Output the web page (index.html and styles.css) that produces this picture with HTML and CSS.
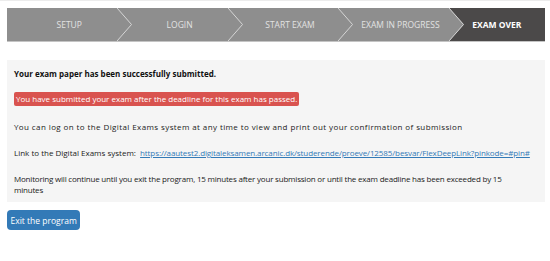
FILE: index.html
```html
<!DOCTYPE html>
<html lang="en">
<head>
    <meta charset="UTF-8">
    <meta name="viewport" content="width=device-width, initial-scale=1.0">
    <title>Exam over</title>
    <link rel="stylesheet" href="styles.css">
</head>
<body>

    <div class="steps">
        <div class="step first">SETUP
            <svg class="chevron" viewBox="0 0 16 34" preserveAspectRatio="none"><polyline points="0,0 14.5,17 0,34"/></svg>
        </div>
        <div class="step">LOGIN
            <svg class="chevron" viewBox="0 0 16 34" preserveAspectRatio="none"><polyline points="0,0 14.5,17 0,34"/></svg>
        </div>
        <div class="step">START EXAM
            <svg class="chevron" viewBox="0 0 16 34" preserveAspectRatio="none"><polyline points="0,0 14.5,17 0,34"/></svg>
        </div>
        <div class="step">EXAM IN PROGRESS
            <svg class="chevron" viewBox="0 0 16 34" preserveAspectRatio="none"><polyline points="0,0 14.5,17 0,34"/></svg>
        </div>
        <div class="step active">EXAM OVER</div>
    </div>

    <div class="panel">
        <p class="heading">Your exam paper has been successfully submitted.</p>
        <p class="alert">You have submitted your exam after the deadline for this exam has passed.</p>
        <p class="info wide">You can log on to the Digital Exams system at any time to view and print out your confirmation of submission</p>
        <p class="info link-line">Link to the Digital Exams system: &nbsp;<a href="#">https://aautest2.digitaleksamen.arcanic.dk/studerende/proeve/12585/besvar/FlexDeepLink?pinkode=#pin#</a></p>
        <p class="info monitor">Monitoring will continue until you exit the program, 15 minutes after your submission or until the exam deadline has been exceeded by 15 minutes</p>
    </div>

    <button class="exit">Exit the program</button>

</body>
</html>
```

FILE: styles.css
```css
html {
    border-top: 1px solid #ececec;
}
body {
    margin: 7px 5px 0 7px;
    font-family: "Open Sans", "Noto Sans", sans-serif;
    font-size: 8px;
    color: #222;
    background: #fff;
}
.steps {
    display: flex;
    height: 34px;
    background: #8e8e8e;
    border-bottom: 1px solid #c4c4c4;
    box-sizing: border-box;
}
.step {
    position: relative;
    flex: 1;
    display: flex;
    align-items: center;
    justify-content: center;
    padding-left: 14px;
    color: #e2e2e2;
    font-size: 8.5px;
}
.step.active {
    background: #4b4949;
    color: #fff;
    font-weight: 700;
    clip-path: polygon(0 0, 100% 0, 100% 100%, 0 100%, 15px 50%);
    padding-left: 0;
}
.chevron {
    position: absolute;
    top: 0;
    right: -16px;
    width: 16px;
    height: 100%;
    z-index: 2;
}
.chevron polyline {
    fill: #8e8e8e;
    stroke: #d6d6d6;
    stroke-width: 1;
}
.panel {
    margin-top: 18px;
    background: #f5f5f5;
    padding: 8px 7px 7px;
}
.panel p {
    margin: 0;
    line-height: 11px;
}
.heading {
    font-weight: 700;
    color: #111;
}
.alert {
    display: inline-block;
    margin-top: 13px !important;
    padding: 2px 2px;
    line-height: 10px !important;
    background: #d9534f;
    color: #fff;
    border-radius: 2px;
}
.info {
    margin-top: 15px !important;
}
.wide {
    letter-spacing: 0.4px;
}
.link-line {
    white-space: nowrap;
}
.monitor {
    max-width: 505px;
    letter-spacing: -0.2px;
}
.info a {
    color: #337ab7;
    letter-spacing: -0.1px;
}
.exit {
    margin-top: 8px;
    height: 20px;
    padding: 0 3.5px;
    background: #337ab7;
    color: #fff;
    border: none;
    border-radius: 4px;
    font-family: "Open Sans", "Noto Sans", sans-serif;
    font-size: 8.5px;
    cursor: pointer;
}
```
